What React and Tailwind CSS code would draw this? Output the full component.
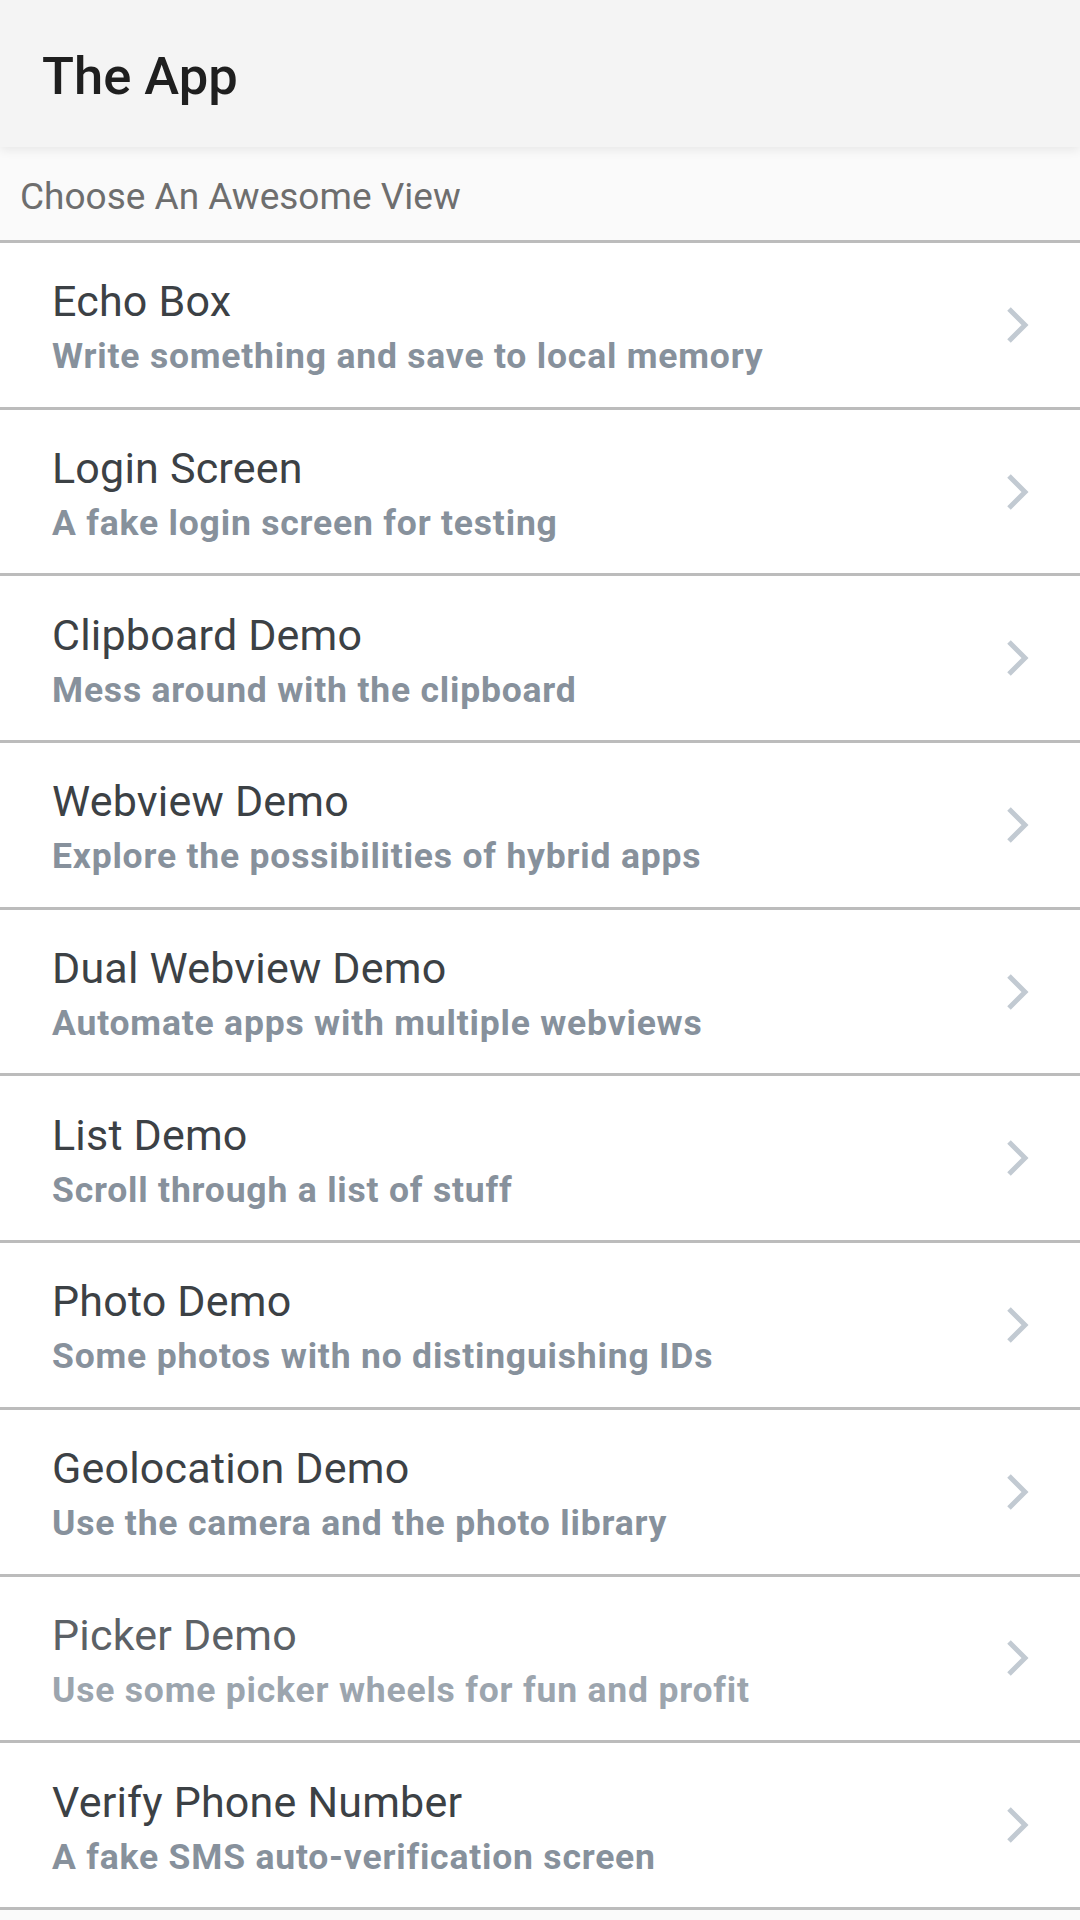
// Rows of the main menu
const views = [
  { title: "Echo Box", sub: "Write something and save to local memory" },
  { title: "Login Screen", sub: "A fake login screen for testing" },
  { title: "Clipboard Demo", sub: "Mess around with the clipboard" },
  { title: "Webview Demo", sub: "Explore the possibilities of hybrid apps" },
  { title: "Dual Webview Demo", sub: "Automate apps with multiple webviews" },
  { title: "List Demo", sub: "Scroll through a list of stuff" },
  { title: "Photo Demo", sub: "Some photos with no distinguishing IDs" },
  { title: "Geolocation Demo", sub: "Use the camera and the photo library" },
  { title: "Picker Demo", sub: "Use some picker wheels for fun and profit", dim: true },
  { title: "Verify Phone Number", sub: "A fake SMS auto-verification screen" },
];

const Chevron = () => (
  <svg width="26" height="40" viewBox="0 0 26 40" className="shrink-0">
    <polyline
      points="4,4 20,20 4,36"
      fill="none"
      stroke="#c2cad2"
      strokeWidth="5"
      strokeLinejoin="miter"
    />
  </svg>
);

const ViewRow = ({ title, sub, dim }) => (
  <div className="flex items-center h-[166.7px] border-b-[3px] border-[#bcbcbc] bg-white pl-[52px] pr-[49px]">
    <div className="flex-1 flex flex-col pt-[4px]">
      <span
        className={`text-[43px] leading-[48px] tracking-[0.2px] ${dim ? "text-[#5c6166]" : "text-[#3c4145]"}`}
      >
        {title}
      </span>
      <span
        className={`text-[35.5px] leading-[40px] font-bold tracking-[0.8px] mt-[11px] ${dim ? "text-[#9ca5ae]" : "text-[#87919c]"}`}
      >
        {sub}
      </span>
    </div>
    <Chevron />
  </div>
);

export default function App() {
  return (
    <div className="min-h-[1920px] bg-[#fafafa] font-['Roboto',sans-serif]">
      {/* Header */}
      <div className="relative z-10 h-[147px] bg-[#f4f4f4] flex items-center pl-[42px] pt-[5px] shadow-[0_3px_10px_rgba(0,0,0,0.08)]">
        <h1 className="text-[52.5px] leading-none font-medium text-[#1f1f1f]">The App</h1>
      </div>

      {/* Section label */}
      <div className="h-[96px] bg-[#fafafa] border-b-[3px] border-[#bcbcbc] flex items-center pl-[20px] pt-[5px]">
        <span className="text-[37px] leading-none text-[#6e6e6e]">Choose An Awesome View</span>
      </div>

      {views.map((v) => (
        <ViewRow key={v.title} {...v} />
      ))}
    </div>
  );
}
